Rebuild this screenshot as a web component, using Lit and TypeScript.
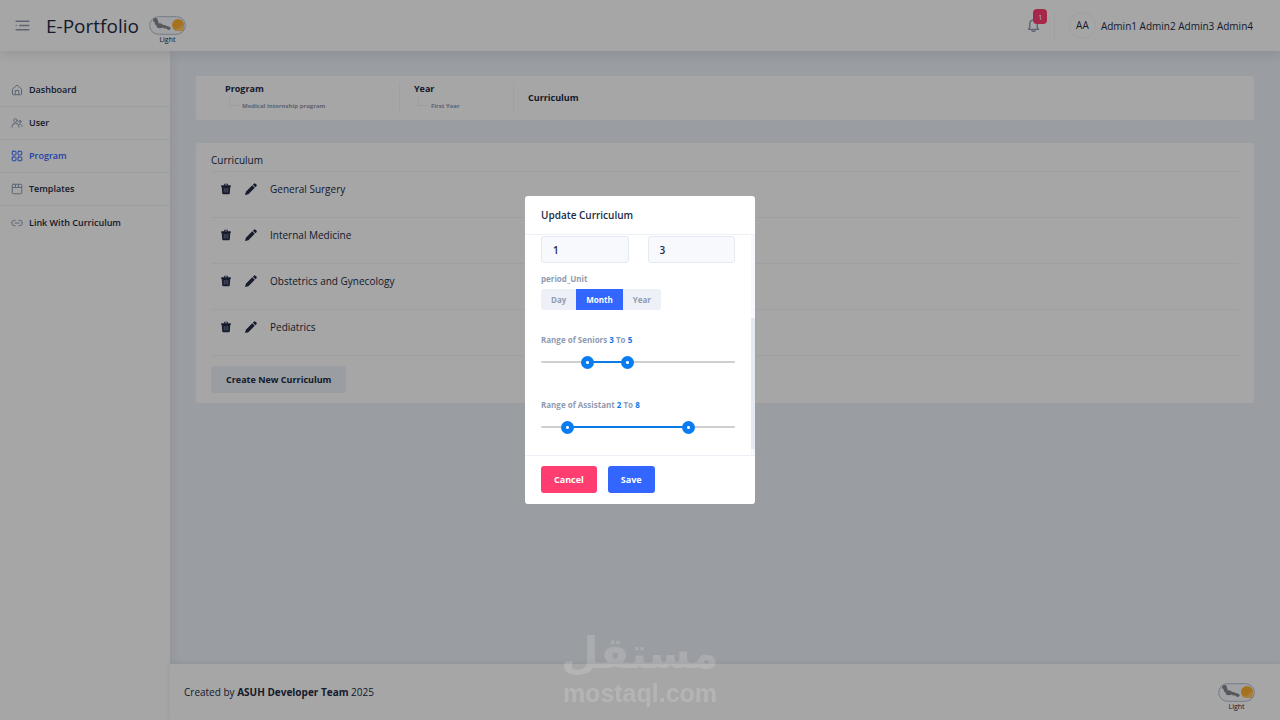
import { LitElement, html, css, svg } from "lit";
import { customElement, property, state } from "lit/decorators.js";
import { classMap } from "lit/directives/class-map.js";

const line = (body: unknown) => html`<svg viewBox="0 0 24 24" fill="none" stroke="currentColor" stroke-width="2" stroke-linecap="round" stroke-linejoin="round" aria-hidden="true">${body}</svg>`;

const icons: Record<string, unknown> = {
  menu: line(svg`<path d="M3 6h18M8 12h13M3 18h18M3 12h.1"/>`),
  home: line(svg`<path d="M4 21.500a1 1 0 0 1-1-1V10.200L12 2l9 8.200v10.300a1 1 0 0 1-1 1zM8.500 21v-8h7v8"/>`),
  user: line(svg`<circle cx="9" cy="7" r="3.500"/><path d="M2 20.500v-1a7 7 0 0 1 14 0v1"/><circle cx="18" cy="9" r="2.200"/><path d="M17 14.200a4.500 4.500 0 0 1 5.500 4.600"/>`),
  grid: line(svg`<rect x="2.500" y="2.500" width="7.500" height="7.500" rx="1.300"/><rect x="14" y="2.500" width="7.500" height="7.500" rx="1.300"/><rect x="2.500" y="14" width="7.500" height="7.500" rx="1.300"/><rect x="14" y="14" width="7.500" height="7.500" rx="1.300"/>`),
  layout: line(svg`<rect x="2.500" y="2.500" width="19" height="19" rx="2"/><path d="M3 9h18M9 3v6M15 3v6" />`),
  link: line(svg`<path d="M8.500 17.500H7a5.500 5.500 0 0 1 0-11h1.500M15.500 6.500H17a5.500 5.500 0 0 1 0 11h-1.500M8 12h8"/>`),
  bell: line(svg`<path d="M5 17.500h14l-1.700-2.400V9.300a5.300 5.300 0 0 0-10.600 0v5.800zM9.500 18a2.500 2.500 0 0 0 5 0"/>`),
  trash: html`<svg viewBox="0 0 24 24" aria-hidden="true"><path fill="currentColor" d="M2.500 4.500H8V3a1.500 1.500 0 0 1 1.500-1.500h5A1.500 1.500 0 0 1 16 3v1.500h5.500v3.500h-1l-1 13a2 2 0 0 1-2 1.500h-11a2 2 0 0 1-2-1.500l-1-13h-1zm7 0h5V3.200h-5z"/><path stroke="#8f9bb3" stroke-width="1.400" d="M8.500 10v9M12 10v9M15.500 10v9"/></svg>`,
  pencil: html`<svg viewBox="0 0 24 24" aria-hidden="true"><path fill="currentColor" d="M0 24l1.800-6.700L14.500 4.600l5 5L6.700 22.300zM15.800 3.300l2-2a2.200 2.200 0 0 1 3.100 0l1.900 1.900a2.200 2.200 0 0 1 0 3.100l-2 2z"/></svg>`,
};

@customElement("theme-switch")
class ThemeSwitch extends LitElement {
  static styles = css`
    :host { display: block; font-size: 7px; line-height: 8px; color: #222b45; }
    .switch { display: flex; flex-direction: column; align-items: center; gap: 1px; padding: 0; border: 0; background: none; font: inherit; color: inherit; cursor: pointer; }
    svg { display: block; width: 37px; height: 19px; }
  `;
  render() {
    return html`<button class="switch">
      <svg viewBox="0 0 37 19" aria-hidden="true">
        <rect x=".7" y=".7" width="35.600" height="17.600" rx="8.800" fill="#f7f9fd" stroke="#b3bccd"/>
        <g fill="#86888c">
          <ellipse cx="6.500" cy="4.300" rx="2.400" ry="2.300"/>
          <ellipse cx="7.700" cy="7" rx="2" ry="2.200"/>
          <ellipse cx="10.700" cy="9.700" rx="3.200" ry="2.500"/>
          <ellipse cx="16.500" cy="10.900" rx="2.600" ry="1.500"/>
          <ellipse cx="19.600" cy="12.300" rx="1.900" ry="1.700"/>
          <path d="M12 9h4v2.500h-4z"/>
        </g>
        <circle cx="29" cy="9" r="6" fill="#ffb02e"/>
        <path fill="#ffc56a" d="M24 12.500q5 2.500 10-4.500l1 4.500-1.500 3-3-.7-4 .3z"/>
      </svg>
      <span>Light</span>
    </button>`;
  }
}

@customElement("range-pair")
class RangePair extends LitElement {
  @property() label = "";
  @property({ type: Number }) low = 1;
  @property({ type: Number }) high = 10;
  static styles = css`
    :host { display: block; }
    .title { margin: 0; font-size: 8px; line-height: 12px; font-weight: 700; color: #8f9bb3; }
    .value { color: #0a7ae8; }
    .slider { position: relative; height: 14px; margin-top: 9px; display: flex; align-items: center; }
    .track { width: 100%; height: 2px; padding: 0 7px; box-sizing: border-box; background: #cfcfcf; border-radius: 1px; }
    .fill { height: 2px; background: #0a7ae8; }
    input { position: absolute; inset: 0; width: 100%; height: 14px; margin: 0; appearance: none; background: none; pointer-events: none; }
    input::-webkit-slider-thumb { appearance: none; pointer-events: auto; width: 13px; height: 13px; border: 0; border-radius: 50%; background: radial-gradient(circle, #fff 0 1px, #0a7cf2 2px); }
  `;
  render() {
    const at = (v: number) => ((v - 1) / 9) * 100;
    return html`<p class="title">${this.label} <span class="value">${this.low}</span> To <span class="value">${this.high}</span></p>
      <div class="slider">
        <div class="track"><div class="fill" style="margin-left:${at(this.low)}%;width:${at(this.high) - at(this.low)}%"></div></div>
        <input type="range" min="1" max="10" aria-label="${this.label} minimum" .value=${String(this.low)} @input=${(e: any) => (this.low = +e.target.value)}>
        <input type="range" min="1" max="10" aria-label="${this.label} maximum" .value=${String(this.high)} @input=${(e: any) => (this.high = +e.target.value)}>
      </div>`;
  }
}

@customElement("app-root")
class AppRoot extends LitElement {
  @state() unit = "Month";

  static styles = css`
    :host { display: block; min-height: 100vh; font-family: "Open Sans", sans-serif; font-size: 10px; line-height: 16px; color: #222b45; }
    * { box-sizing: border-box; }
    a { color: inherit; text-decoration: none; }
    button { font: inherit; color: inherit; border: 0; background: none; padding: 0; cursor: pointer; }
    svg { display: block; width: 12px; height: 12px; }
    .page { display: flex; flex-direction: column; min-height: 100vh; background: #edf1f7; }
    .top { position: relative; display: flex; align-items: center; height: 51px; padding: 0 27px 0 14px; background: #fff; box-shadow: 0 3px 10px rgba(44, 51, 73, .12); }
    .toggle { color: #8f9bb3; margin-right: 15px; }
    .toggle svg { width: 17px; height: 17px; }
    .brand { font-size: 19px; line-height: 26px; margin-right: 10px; }
    .top theme-switch { padding-top: 8px; }
    .account { display: flex; align-items: center; margin-left: auto; }
    .bell { position: relative; color: #8f9bb3; }
    .bell svg { width: 17px; height: 17px; }
    .badge { position: absolute; left: 8px; top: -8px; padding: 0 5px; font-size: 8px; line-height: 15px; border-radius: 4px; background: #ff3d71; color: #fff; }
    .rule { width: 1px; height: 28px; margin: 0 14px 0 12px; background: #f5f6f9; }
    .avatar { width: 27px; height: 27px; line-height: 25px; margin-right: 5px; text-align: center; border: 1px solid #f5f6f9; border-radius: 50%; }
    .columns { display: flex; flex: 1; }
    .side { width: 170px; padding-top: 23px; background: #fff; box-shadow: 0 3px 10px rgba(44, 51, 73, .1); }
    .item { display: flex; align-items: center; gap: 6px; height: 33px; padding: 0 11px; font-size: 9px; font-weight: 600; border-bottom: 1px solid #f0f3f8; }
    .item:last-child { border-bottom: 0; }
    .item svg { color: #8f9bb3; }
    .item.on, .item.on svg { color: #3366ff; }
    .main { flex: 1; display: flex; flex-direction: column; }
    .content { flex: 1; display: flex; flex-direction: column; gap: 21px; padding: 24px 25px; }
    .card { background: #fff; border-radius: 3px; border: 1px solid #eff2f7; }
    .crumbs { display: flex; align-items: center; height: 46px; padding: 0 14px; font-weight: 700; }
    .crumb { padding-left: 14px; border-left: 1px solid #f5f6f9; height: 30px; }
    .crumb.first { border-color: transparent; width: 189px; }
    .crumb.second { width: 114px; }
    .crumb a { display: block; font-size: 9px; line-height: 12px; }
    .crumb.last a { line-height: 30px; }
    .sub { display: flex; gap: 3px; font-size: 6px; line-height: 10px; margin-left: 4px; padding-top: 6px; height: 16px; color: #8f9bb3; }
    .sub i { width: 10px; height: 9px; margin-top: -4px; border: solid #edf1f7; border-width: 0 0 1px 1px; }
    .list { padding: 9px 15px 10px; }
    h1 { margin: 0; padding-bottom: 3px; font-size: 10px; font-weight: 400; border-bottom: 1px solid #f2f4f8; }
    ul { list-style: none; margin: 0; padding: 0; }
    li { display: flex; align-items: flex-start; gap: 13px; height: 46px; padding: 9px; border-bottom: 1px solid #f2f4f8; }
    li button { padding-top: 2px; }
    .create { margin-top: 10px; padding: 0 15px; height: 27px; font-size: 9px; font-weight: 700; background: #edf1f7; border-radius: 3px; }
    .foot { display: flex; align-items: center; justify-content: space-between; height: 56px; padding: 0 25px 0 14px; background: #fff; box-shadow: 0 0 6px rgba(44, 51, 73, .1); }
    .foot theme-switch { padding-top: 10px; }
    .backdrop { position: fixed; inset: 0; display: flex; align-items: center; justify-content: center; padding-bottom: 20px; background: rgba(0, 0, 0, .35); }
    .dialog { position: relative; width: 230px; background: #fff; border-radius: 3px; font-weight: 700; }
    h2 { margin: 0; padding: 11px 16px; font-size: 10px; font-weight: 600; line-height: 16px; border-bottom: 1px solid #edf1f7; }
    .body { position: relative; padding: 1px 20px 21px 16px; border-bottom: 1px solid #edf1f7; }
    .pair { display: flex; gap: 19px; }
    .pair input { flex: 1; min-width: 0; height: 27px; padding: 0 11px; font: 600 10px "Open Sans", sans-serif; color: #222b45; background: #f7f9fc; border: 1px solid #e4e9f2; border-radius: 3px; }
    .label { margin: 10px 0 4px; font-size: 8px; line-height: 12px; color: #8f9bb3; }
    .units { display: flex; width: fit-content; overflow: hidden; border-radius: 3px; background: #edf1f7; margin-bottom: 24px; }
    .units button { padding: 0 10px; height: 21px; font-size: 8px; font-weight: 700; color: #8f9bb3; }
    .units .on { background: #3366ff; color: #fff; }
    .second-range { margin-top: 30px; }
    .thumb { position: absolute; right: 0; top: 83px; bottom: 6px; width: 4px; background: #e4e9f2; }
    .rail { position: absolute; right: 0; top: 0; bottom: 0; width: 4px; background: #f7f9fc; }
    .actions { display: flex; gap: 11px; padding: 10px 16px 11px; }
    .actions button { height: 27px; padding: 0 13px; font-size: 9px; font-weight: 700; color: #fff; border-radius: 3px; }
    .cancel { background: #ff3d71; }
    .save { background: #3366ff; }
    .mark { position: fixed; left: 0; right: 0; bottom: 12px; display: flex; flex-direction: column; align-items: center; color: #fff; opacity: .16; pointer-events: none; font-weight: 700; }
    .mark-ar { font-family: "DejaVu Sans", sans-serif; font-size: 43px; line-height: 50px; }
    .mark-en { font-family: "Liberation Sans", sans-serif; font-size: 25px; line-height: 30px; }
  `;

  render() {
    const nav = [["home", "Dashboard"], ["user", "User"], ["grid", "Program"], ["layout", "Templates"], ["link", "Link With Curriculum"]];
    const rows = ["General Surgery", "Internal Medicine", "Obstetrics and Gynecology", "Pediatrics"];
    return html`
      <div class="page">
        <header class="top">
          <button class="toggle" aria-label="Toggle menu">${icons.menu}</button>
          <a class="brand" href="#">E-Portfolio</a>
          <theme-switch></theme-switch>
          <div class="account">
            <button class="bell" aria-label="Notifications">${icons.bell}<span class="badge">1</span></button>
            <div class="rule"></div>
            <div class="avatar">AA</div>
            <span>Admin1 Admin2 Admin3 Admin4</span>
          </div>
        </header>
        <div class="columns">
          <nav class="side">
            ${nav.map(([icon, name]) => html`<a href="#" class=${classMap({ item: true, on: name === "Program" })}>${icons[icon]}<span>${name}</span></a>`)}
          </nav>
          <div class="main">
            <main class="content">
              <div class="card crumbs">
                <div class="crumb first"><a href="#">Program</a><div class="sub"><i></i>Medical internship program</div></div>
                <div class="crumb second"><a href="#">Year</a><div class="sub"><i></i>First Year</div></div>
                <div class="crumb last"><a href="#">Curriculum</a></div>
              </div>
              <section class="card list">
                <h1>Curriculum</h1>
                <ul>
                  ${rows.map((name) => html`<li>
                    <button aria-label="Delete ${name}">${icons.trash}</button>
                    <button aria-label="Edit ${name}">${icons.pencil}</button>
                    <span>${name}</span>
                  </li>`)}
                </ul>
                <button class="create">Create New Curriculum</button>
              </section>
            </main>
            <footer class="foot">
              <span>Created by <b>ASUH Developer Team</b> 2025</span>
              <theme-switch></theme-switch>
            </footer>
          </div>
        </div>
      </div>
      <div class="backdrop">
        <div class="dialog" role="dialog" aria-labelledby="title">
          <h2 id="title">Update Curriculum</h2>
          <div class="body">
            <div class="pair"><input aria-label="Period from" value="1"><input aria-label="Period to" value="3"></div>
            <div class="label" id="unit">period_Unit</div>
            <div class="units" role="group" aria-labelledby="unit">
              ${["Day", "Month", "Year"].map((u) => html`<button class=${classMap({ on: u === this.unit })} @click=${() => (this.unit = u)}>${u}</button>`)}
            </div>
            <range-pair label="Range of Seniors" low="3" high="5"></range-pair>
            <range-pair class="second-range" label="Range of Assistant" low="2" high="8"></range-pair>
            <div class="rail"></div>
            <div class="thumb"></div>
          </div>
          <div class="actions"><button class="cancel">Cancel</button><button class="save">Save</button></div>
        </div>
      </div>
      <div class="mark"><span class="mark-ar" lang="ar">مستقل</span><span class="mark-en">mostaql.com</span></div>
    `;
  }
}
